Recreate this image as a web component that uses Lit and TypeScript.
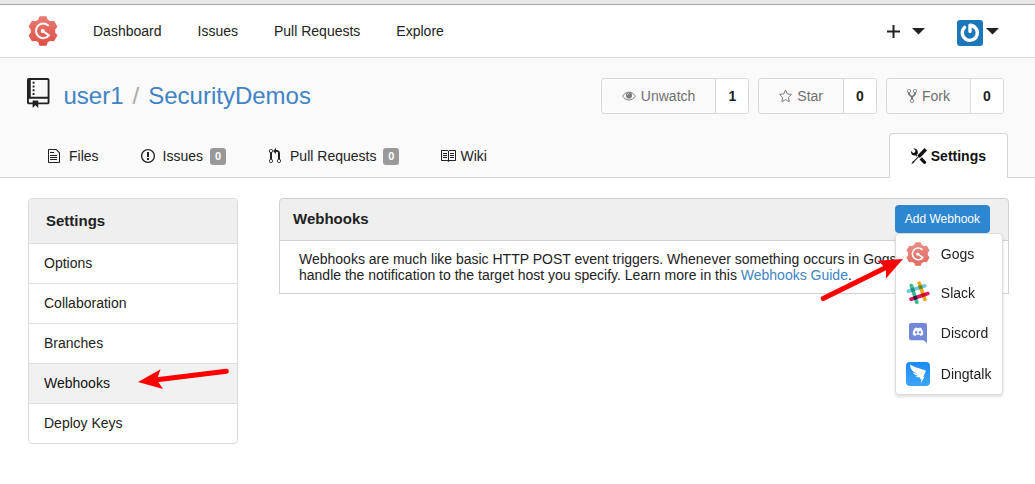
import { LitElement, html, css, svg } from "lit";
import { customElement } from "lit/decorators.js";

const OCTICONS: Record<string, { w: number; d: string }> = {
  repo: {
    w: 12,
    d: "M4 9H3V8h1v1zm0-3H3v1h1V6zm0-2H3v1h1V4zm0-2H3v1h1V2zm8-1v12c0 .55-.45 1-1 1H6v2l-1.5-1.5L3 16v-2H1c-.55 0-1-.45-1-1V1c0-.55.45-1 1-1h10c.55 0 1 .45 1 1zm-1 10H1v2h2v-1h3v1h5v-2zm0-10H2v9h9V1z",
  },
  file: {
    w: 12,
    d: "M6 5H2V4h4v1zM2 8h7V7H2v1zm0 2h7V9H2v1zm0 2h7v-1H2v1zm10-7.5V14c0 .55-.45 1-1 1H1c-.55 0-1-.45-1-1V2c0-.55.45-1 1-1h7.5L12 4.5zM11 5L8 2H1v12h10V5z",
  },
  issue: {
    w: 14,
    d: "M7 2.3c3.14 0 5.7 2.56 5.7 5.7s-2.56 5.7-5.7 5.7A5.71 5.71 0 0 1 1.3 8c0-3.14 2.56-5.7 5.7-5.7zM7 1C3.14 1 0 4.14 0 8s3.14 7 7 7 7-3.14 7-7-3.14-7-7-7zm1 3H6v5h2V4zm0 6H6v2h2v-2z",
  },
  pull: {
    w: 12,
    d: "M11 11.28V5c-.03-.78-.34-1.47-.94-2.06C9.46 2.35 8.78 2.03 8 2H7V0L4 3l3 3V4h1c.27.02.48.11.69.31.21.2.3.42.31.69v6.28A1.993 1.993 0 0 0 10 15a1.993 1.993 0 0 0 1-3.72zm-1 2.92c-.66 0-1.2-.55-1.2-1.2 0-.65.55-1.2 1.2-1.2.65 0 1.2.55 1.2 1.2 0 .65-.55 1.2-1.2 1.2zM4 3c0-1.11-.89-2-2-2a1.993 1.993 0 0 0-1 3.72v6.56A1.993 1.993 0 0 0 2 15a1.993 1.993 0 0 0 1-3.72V4.72c.59-.34 1-.98 1-1.72zm-.8 10c0 .66-.55 1.2-1.2 1.2-.65 0-1.2-.55-1.2-1.2 0-.65.55-1.2 1.2-1.2.65 0 1.2.55 1.2 1.2zM2 4.2C1.34 4.2.8 3.65.8 3c0-.65.55-1.2 1.2-1.2.65 0 1.2.55 1.2 1.2 0 .65-.55 1.2-1.2 1.2z",
  },
  book: {
    w: 16,
    d: "M3 5h4v1H3V5zm0 3h4V7H3v1zm0 2h4V9H3v1zm11-5h-4v1h4V5zm0 2h-4v1h4V7zm0 2h-4v1h4V9zm2-6v9c0 .55-.45 1-1 1H9.5l-1 1-1-1H2c-.55 0-1-.45-1-1V3c0-.55.45-1 1-1h5.5l1 1 1-1H15c.55 0 1 .45 1 1zm-8 .5L7.5 3H2v9h6V3.5zm7-.5H9.5l-.5.5V12h6V3z",
  },
  tools: {
    w: 16,
    d: "M4.48 7.27c.26.26 1.28 1.33 1.28 1.33l.56-.58-.88-.91 1.69-1.8s-.76-.74-.43-.45c.32-1.19.03-2.51-.87-3.44C4.93.5 3.66.2 2.52.51l1.93 2-.51 1.96-1.89.52-1.93-1.99C-.19 4.17.1 5.48 1 6.4c.94.98 2.29 1.26 3.48.87zm6.44 1.94l-2.33 2.3 3.84 3.98c.31.33.73.49 1.14.49.41 0 .82-.16 1.14-.49.63-.65.63-1.7 0-2.35l-3.79-3.93zM16 2.53L13.55 0 6.33 7.46l.88.91-4.31 4.46-.99.53-1.39 2.27.35.37 2.2-1.44.51-1.02L7.9 9.08l.88.91L16 2.53z",
  },
  fork: {
    w: 10,
    d: "M8 1a1.993 1.993 0 0 0-1 3.72V6L5 8 3 6V4.72A1.993 1.993 0 0 0 2 1a1.993 1.993 0 0 0-1 3.72V6.5l3 3v1.78A1.993 1.993 0 0 0 5 15a1.993 1.993 0 0 0 1-3.72V9.5l3-3V4.72A1.993 1.993 0 0 0 8 1zM2 4.2C1.34 4.2.8 3.65.8 3c0-.65.55-1.2 1.2-1.2.65 0 1.2.55 1.2 1.2 0 .65-.55 1.2-1.2 1.2zm3 10c-.66 0-1.2-.55-1.2-1.2 0-.65.55-1.2 1.2-1.2.65 0 1.2.55 1.2 1.2 0 .65-.55 1.2-1.2 1.2zm3-10c-.66 0-1.2-.55-1.2-1.2 0-.65.55-1.2 1.2-1.2.65 0 1.2.55 1.2 1.2 0 .65-.55 1.2-1.2 1.2z",
  },
};

const octicon = (name: string, height = 16) => {
  const { w, d } = OCTICONS[name];
  return html`<svg width=${(w * height) / 16} height=${height} viewBox="0 0 ${w} 16" fill="currentColor" aria-hidden="true">
    <path fill-rule="evenodd" d=${d}></path>
  </svg>`;
};

// Outline of the six-toothed gear, centred in a 30-unit box.
const gearPoints = () => {
  const points: string[] = [];
  for (let i = 0; i < 6; i++) {
    const steps: [number, number][] = [[-20, 11.6], [-12, 14.2], [12, 14.2], [20, 11.6]];
    for (const [offset, radius] of steps) {
      const angle = ((-90 + 60 * i + offset) * Math.PI) / 180;
      points.push(`${(15 + radius * Math.cos(angle)).toFixed(2)},${(15 + radius * Math.sin(angle)).toFixed(2)}`);
    }
  }
  return points.join(" ");
};

const gogsLogo = (size: number) => html`<svg width=${size} height=${size} viewBox="0 0 30 30" aria-hidden="true">
  <defs>
    <linearGradient id="gear" x1="0" y1="0" x2="0" y2="1">
      <stop offset="0" stop-color="#e57b72"></stop>
      <stop offset="1" stop-color="#df5146"></stop>
    </linearGradient>
  </defs>
  <polygon points=${gearPoints()} fill="url(#gear)" stroke="url(#gear)" stroke-width="1.6" stroke-linejoin="round"></polygon>
  <path d="M20 9.3A7.3 7.3 0 1 0 21 19.4L15 15.2" fill="none" stroke="#fff" stroke-width="2" stroke-linecap="round" stroke-linejoin="round"></path>
  <circle cx="14.7" cy="15" r="2" fill="#fff"></circle>
</svg>`;

const slackLogo = html`<svg width="24" height="24" viewBox="0 0 24 24" fill="none" stroke-width="3.7" stroke-linecap="round" aria-hidden="true">
  <path class="blend" d="M2.4 10.2L18.8 4.8" stroke="#70cadb"></path>
  <path class="blend" d="M5 18.2L21.8 12.6" stroke="#e01765"></path>
  <path class="blend" d="M5.4 4.6L10.8 21.2" stroke="#3eb890"></path>
  <path class="blend" d="M13.2 2.2L18.8 18.4" stroke="#e9a820"></path>
</svg>`;

const discordLogo = html`<svg width="24" height="24" viewBox="0 0 24 24" aria-hidden="true">
  <path d="M5 2h14a2 2 0 0 1 2 2v18l-3.4-2.8H5a2 2 0 0 1-2-2V4a2 2 0 0 1 2-2z" fill="#7289da"></path>
  <path d="M8.4 7.4c1-.7 1.8-.9 2.2-.9l.3.5h2.3l.3-.5c.5 0 1.3.2 2.2.9 1.1 2 1.6 4.1 1.5 6.1-.8 1-1.8 1.3-2.8 1.3l-.7-1h-3.4l-.7 1c-1 0-2-.3-2.8-1.3-.1-2 .4-4.1 1.6-6.1z" fill="#fff"></path>
  <circle cx="10.2" cy="11.3" r="1.2" fill="#7289da"></circle>
  <circle cx="13.9" cy="11.3" r="1.2" fill="#7289da"></circle>
</svg>`;

const dingtalkLogo = html`<svg width="24" height="24" viewBox="0 0 24 24" aria-hidden="true">
  <defs>
    <linearGradient id="ding" x1="0" y1="0" x2="0" y2="1">
      <stop offset="0" stop-color="#1c8af0"></stop>
      <stop offset="1" stop-color="#3fa5fb"></stop>
    </linearGradient>
  </defs>
  <rect width="24" height="24" rx="4" fill="url(#ding)"></rect>
  <path d="M4 2.4C7 4.6 13 6.2 18.6 8c1.3.5 1.3 1.2.8 2.3-.7 1.7-1.5 3.2-2.3 4.5h1.5L14.6 21.6l.9-4.6h-1.8l.6-1.7c-1.7.3-3.3.2-4.9-1.3 1.2.2 2.2.2 3.2-.1-2.7-.4-4.7-1.2-5.9-3.3 1.6.7 3.2.9 5 .9C7.8 10.3 4.2 8.2 4 2.4z" fill="#fff"></path>
</svg>`;

const eyeIcon = html`<svg width="14" height="16" viewBox="0 0 14 16" aria-hidden="true">
  <path d="M.6 8.2C2.3 5.6 4.5 4.2 7 4.2s4.7 1.4 6.4 4c-1.7 2.5-3.9 3.8-6.4 3.8S2.3 10.7.6 8.2z" fill="none" stroke="currentColor"></path>
  <circle cx="7" cy="7.4" r="3.1" fill="currentColor"></circle>
  <path d="M5.3 7.2A1.8 1.8 0 0 1 7 5.5" fill="none" stroke="#fafafa" stroke-width=".7"></path>
</svg>`;

const starIcon = html`<svg width="13" height="16" viewBox="0 0 13 16" aria-hidden="true">
  <path d="M6.5 2l1.8 3.9 4.2.5-3.1 3 .8 4.3-3.7-2.1-3.7 2.1.8-4.300L.5 6.400l4.200-.5z" fill="none" stroke="currentColor" stroke-linejoin="round"></path>
</svg>`;

const caret = html`<svg width="13" height="7" viewBox="0 0 13 7" fill="currentColor" aria-hidden="true"><path d="M0 0h13L6.5 6.5z"></path></svg>`;

const plusIcon = html`<svg width="13" height="13" viewBox="0 0 13 13" fill="currentColor" aria-hidden="true"><path d="M5.5 0h2v5.5H13v2H7.5V13h-2V7.5H0v-2h5.5z"></path></svg>`;

const avatar = html`<svg width="26" height="26" viewBox="0 0 26 26" aria-hidden="true">
  <rect width="26" height="26" rx="3" fill="#1b76ba"></rect>
  <path d="M7.6 7.4A7.5 7.5 0 1 0 13 5.3V11.4" fill="none" stroke="#fff" stroke-width="3.4" stroke-linecap="round" stroke-linejoin="round"></path>
</svg>`;

// A marker arrow that points left along its own axis, turned about the tip.
const arrow = (angle: number) => svg`<g transform="translate(100 50) rotate(${angle})">
  <path d="M19 0H89" stroke="#f00" stroke-width="5" stroke-linecap="round"></path>
  <path d="M0 0L24 -10L19 0L24 10z" fill="#f00"></path>
</g>`;

@customElement("app-root")
export class AppRoot extends LitElement {
  static styles = css`
    :host {
      display: block;
      min-height: 100vh;
      background: #fff;
      color: #222;
      font: 14px/20px "Liberation Sans", Arial, sans-serif;
    }
    * { box-sizing: border-box; }
    a { color: inherit; text-decoration: none; }
    h1, h2, p, ul { margin: 0; padding: 0; }
    ul { list-style: none; }
    svg { display: block; flex: none; }
    button { font: inherit; color: inherit; border: 0; background: none; padding: 0; cursor: pointer; }

    .strip { height: 5px; background: #e8e8e6; border-bottom: 1px solid #a9a9a9; }
    .nav {
      display: flex; align-items: center; height: 53px;
      padding: 0 36px 0 28px; border-bottom: 1px solid #d9d9d9;
    }
    .links { display: flex; gap: 36px; margin-left: 35px; }
    .tools { display: flex; align-items: center; gap: 32px; margin-left: auto; }
    .create { display: flex; align-items: center; gap: 12px; }
    .account { display: flex; align-items: flex-start; gap: 3px; height: 34px; }
    .account svg:first-child { margin-top: 6px; }
    .account svg:last-child { margin-top: 14px; }

    .repo { background: #fafafa; border-bottom: 1px solid #d4d4d5; padding: 20px 27px 0 27px; }
    .title { display: flex; align-items: center; justify-content: space-between; padding-right: 4px; }
    .name { display: flex; align-items: center; font-size: 24px; line-height: 36px; font-weight: 400; color: #4183c4; }
    .name svg { color: #222; margin-right: 14px; align-self: flex-start; }
    .slash { color: #aaa; margin: 0 9px; }
    .actions { display: flex; gap: 9px; }
    .group {
      display: flex; height: 36px; border: 1px solid #d9d9da; border-radius: 3px; overflow: hidden;
    }
    .act { display: flex; align-items: center; gap: 5px; padding: 0 20px; color: #6f6f6f; }
    .act svg { opacity: 0.9; }
    .count {
      display: grid; place-items: center; width: 33px;
      background: #fff; border-left: 1px solid #d9d9da; font-weight: 700;
    }
    .tabs { display: flex; height: 44px; margin-top: 19px; padding-left: 19px; }
    .tab { display: flex; align-items: center; height: 46px; margin-right: 41px; }
    .icon { display: grid; place-items: center; width: 16px; margin-right: 7px; }
    .icon.near { margin-right: 4px; }
    .badge {
      margin-left: 7px; width: 16px; height: 17px; border-radius: 3px; background: #999;
      color: #fff; font-size: 11px; line-height: 17px; font-weight: 700; text-align: center;
    }
    .tab.active {
      margin: 0 0 0 auto; padding: 0 21px; height: 45px; color: #111; font-weight: 700;
      background: #fff; border: 1px solid #d4d4d5; border-bottom: 0; border-radius: 4px 4px 0 0;
    }

    .main { display: grid; grid-template-columns: 210px minmax(0, 1fr); gap: 41px; align-items: start; padding: 20px 26px 40px 28px; }
    .side { border: 1px solid #dbdbdc; border-radius: 4px; }
    .side h2 { font-size: 15px; line-height: 44px; padding: 0 17px; background: #efefef; border-radius: 3px 3px 0 0; }
    .side a { position: relative; display: block; line-height: 39px; padding: 0 15px; border-top: 1px solid #dedede; }
    .side a.on { background: #f1f1f1; color: #111; }
    .panel-head {
      display: flex; align-items: center; justify-content: space-between; height: 43px;
      padding: 0 18px 1px 13px; background: #efefef; border: 1px solid #d1d1d2; border-radius: 4px 4px 0 0;
    }
    .panel-head h2 { font-size: 15px; line-height: 20px; }
    .panel-body { border: 1px solid #d1d1d2; border-top: 0; padding: 10px 19px; line-height: 16px; }
    .panel-body a { color: #4183c4; }
    .drop { position: relative; }
    .add { display: block; height: 28px; padding: 0 10px; border-radius: 4px; background: #2c86d0; color: #fff; font-size: 12px; }
    .menu {
      position: absolute; top: 100%; left: 0; z-index: 1; width: 108px;
      background: #fff; border: 1px solid #dcdcdd; border-radius: 4px; box-shadow: 0 2px 3px rgba(34, 36, 38, 0.15);
    }
    .menu a { display: flex; align-items: center; gap: 11px; height: 40px; padding: 0 10px; }
    .menu .faded svg { opacity: 0.85; }
    .menu li:first-child a { height: 39px; }
    .menu li:last-child a { height: 41px; }
    .blend { mix-blend-mode: multiply; }
    .mark { position: absolute; z-index: 2; overflow: visible; pointer-events: none; }
    .mark.row { left: 9px; top: -32px; }
    .mark.gogs { left: -92px; top: 4px; }
  `;

  render() {
    return html`
      <div class="strip"></div>
      <nav class="nav" aria-label="Main">
        <a href="#" aria-label="Home">${gogsLogo(30)}</a>
        <div class="links">
          <a href="#">Dashboard</a><a href="#">Issues</a><a href="#">Pull Requests</a><a href="#">Explore</a>
        </div>
        <div class="tools">
          <button class="create" aria-label="Create">${plusIcon}${caret}</button>
          <button class="account" aria-label="Account">${avatar}${caret}</button>
        </div>
      </nav>

      <header class="repo">
        <div class="title">
          <h1 class="name">
            ${octicon("repo", 30)}<a href="#">user1</a><span class="slash">/</span><a href="#">SecurityDemos</a>
          </h1>
          <div class="actions">
            <div class="group"><button class="act">${eyeIcon}Unwatch</button><a class="count" href="#">1</a></div>
            <div class="group"><button class="act">${starIcon}Star</button><a class="count" href="#">0</a></div>
            <div class="group"><button class="act">${octicon("fork")}Fork</button><a class="count" href="#">0</a></div>
          </div>
        </div>
        <nav class="tabs" aria-label="Repository">
          <a class="tab" href="#"><span class="icon">${octicon("file")}</span>Files</a>
          <a class="tab" href="#"><span class="icon">${octicon("issue")}</span>Issues<span class="badge">0</span></a>
          <a class="tab" href="#"><span class="icon">${octicon("pull")}</span>Pull Requests<span class="badge">0</span></a>
          <a class="tab" href="#"><span class="icon near">${octicon("book")}</span>Wiki</a>
          <a class="tab active" href="#" aria-current="page"><span class="icon near">${octicon("tools")}</span>Settings</a>
        </nav>
      </header>

      <main class="main">
        <nav class="side" aria-label="Settings">
          <h2>Settings</h2>
          <a href="#">Options</a>
          <a href="#">Collaboration</a>
          <a href="#">Branches</a>
          <a class="on" href="#" aria-current="page">Webhooks
            <svg class="mark row" width="200" height="100" viewBox="0 0 200 100" aria-hidden="true">${arrow(-7)}</svg>
          </a>
          <a href="#">Deploy Keys</a>
        </nav>
        <section>
          <div class="panel-head">
            <h2>Webhooks</h2>
            <div class="drop">
              <button class="add" aria-haspopup="true" aria-expanded="true">Add Webhook</button>
              <ul class="menu">
                <li><a class="faded" href="#">${gogsLogo(24)}Gogs</a></li>
                <li><a href="#">${slackLogo}Slack</a></li>
                <li><a href="#">${discordLogo}Discord</a></li>
                <li><a href="#">${dingtalkLogo}Dingtalk</a></li>
              </ul>
              <svg class="mark gogs" width="200" height="100" viewBox="0 0 200 100" aria-hidden="true">${arrow(153.7)}</svg>
            </div>
          </div>
          <p class="panel-body">
            Webhooks are much like basic HTTP POST event triggers. Whenever something occurs in Gogs, we will
            handle the notification to the target host you specify. Learn more in this <a href="#">Webhooks Guide</a>.
          </p>
        </section>
      </main>
    `;
  }
}
